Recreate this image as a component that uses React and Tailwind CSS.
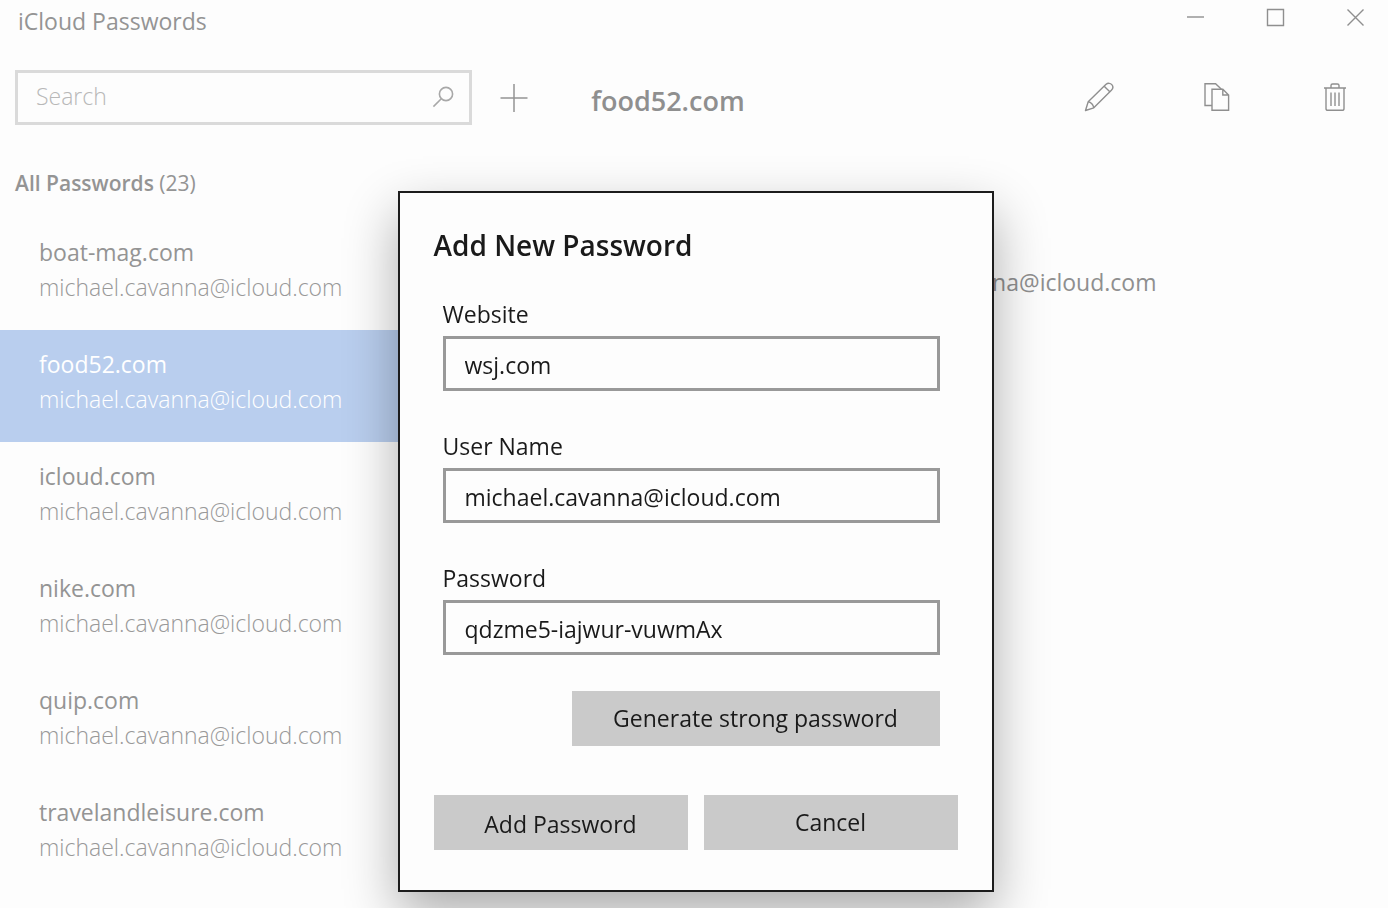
import { useState } from "react";

const EMAIL = "michael.cavanna@icloud.com";

const accounts = [
  { site: "boat-mag.com", user: EMAIL },
  { site: "food52.com", user: EMAIL },
  { site: "icloud.com", user: EMAIL },
  { site: "nike.com", user: EMAIL },
  { site: "quip.com", user: EMAIL },
  { site: "travelandleisure.com", user: EMAIL },
];

const SearchIcon = () => (
  <svg className="w-6 h-6 text-[#a8a8a8]" viewBox="0 0 24 24" fill="none" stroke="currentColor" strokeWidth={1.6}>
    <circle cx="15" cy="8" r="6.6" />
    <path d="M10.3 12.7L2.4 20.6" />
  </svg>
);

const PlusIcon = () => (
  <svg className="w-[30px] h-[30px]" viewBox="0 0 30 30" fill="none" stroke="currentColor" strokeWidth={1.5}>
    <path d="M15 1v28M1.5 15h27" />
  </svg>
);

const PencilIcon = () => (
  <svg className="w-[30px] h-[30px]" viewBox="0 0 30 30" fill="none" stroke="currentColor" strokeWidth={1.4} strokeLinejoin="round">
    <path d="M1.5 28.5L4.2 19.8L21.8 2.6C24 .6 26.6 1.2 27.8 2.6C29.2 4.2 29 6.6 27.4 8.2L9.8 25.8Z" />
    <path d="M20.2 4.2L25.8 9.8M4.2 19.8C6.8 20.2 9.4 22.8 9.8 25.8" />
  </svg>
);

const CopyIcon = () => (
  <svg className="w-[30px] h-[30px]" viewBox="0 0 30 30" fill="none" stroke="currentColor" strokeWidth={1.4}>
    <path d="M10 23.5H3V1.7H13.6L19.4 7.2" />
    <path d="M10 7.2H20.8L26.6 13V28.3H10ZM20.8 7.2V13H26.6" />
  </svg>
);

const TrashIcon = () => (
  <svg className="w-[30px] h-[30px]" viewBox="0 0 30 30" fill="none" stroke="currentColor" strokeWidth={1.4}>
    <path d="M4 6H26M6 6V26.4Q6 28.3 8 28.3H22Q24 28.3 24 26.4V6M11 6V3.6Q11 2 12.6 2H17.4Q19 2 19 3.6V6" />
    <path d="M11 10.5V24M15 10.5V24M19 10.5V24" />
  </svg>
);

const windowButtons = [
  { label: "Minimize", path: "M1 9H18" },
  { label: "Maximize", path: "M1.5 1.5H17.5V17.5H1.5Z" },
  { label: "Close", path: "M1.5 1.5L17.5 17.5M17.5 1.5L1.5 17.5" },
];

const headerActions = [
  { label: "Edit", icon: <PencilIcon /> },
  { label: "Copy", icon: <CopyIcon /> },
  { label: "Delete", icon: <TrashIcon /> },
];

const Sidebar = ({ selected, onSelect }) => (
  <aside className="w-2/5 shrink-0 text-[#949494]">
    <h1 className="pl-[18px] pt-[3px] text-[23px] leading-9">iCloud Passwords</h1>
    <div className="mt-[31px] flex items-center pl-[15px]">
      <div className="flex h-[55px] w-[457px] items-center border-[3px] border-[#dadada] pl-[18px] pr-3.5">
        <input
          type="search"
          aria-label="Search"
          placeholder="Search"
          className="min-w-0 flex-1 bg-transparent pb-0.5 text-[23px] font-light outline-none placeholder:text-[#b8b8b8]"
        />
        <SearchIcon />
      </div>
      <button type="button" aria-label="Add password" className="ml-[27px]">
        <PlusIcon />
      </button>
    </div>
    <h2 className="mt-10 pl-[15px] text-[21px] font-semibold leading-9">
      All Passwords <span className="font-normal">(23)</span>
    </h2>
    <ul className="mt-[17px]">
      {accounts.map(({ site, user }) => (
        <li key={site}>
          <button
            type="button"
            onClick={() => onSelect(site)}
            className={`flex h-28 w-full flex-col items-start pl-[39px] pt-[17px] text-left text-[23px] leading-[35px] ${
              site === selected ? "bg-[#b9ceee] text-white" : ""
            }`}
          >
            <span className={site === selected ? "font-medium" : ""}>{site}</span>
            <span className={site === selected ? "font-light" : "font-light text-[#999999]"}>
              {user}
            </span>
          </button>
        </li>
      ))}
    </ul>
  </aside>
);

const Detail = ({ site }) => (
  <main className="min-w-0 flex-1 text-[#8f8f8f]">
    <div className="flex h-[34px] items-center justify-end gap-[50px] pr-[18px]">
      {windowButtons.map(({ label, path }) => (
        <button key={label} type="button" aria-label={label} className="flex w-[30px] justify-center">
          <svg className="w-[19px] h-[19px]" viewBox="0 0 19 19" fill="none" stroke="currentColor" strokeWidth={1.4}>
            <path d={path} />
          </svg>
        </button>
      ))}
    </div>
    <div className="mt-[42px] flex items-start justify-between pl-9 pr-[34px]">
      <h2 className="pt-1 text-[27px] font-semibold leading-[42px]">{site}</h2>
      <div className="flex gap-20 pt-1.5">
        {headerActions.map(({ label, icon }) => (
          <button key={label} type="button" aria-label={label} className="flex w-[38px] justify-center">
            {icon}
          </button>
        ))}
      </div>
    </div>
    <p className="mt-[142px] pl-[285px] text-[23px] leading-9">{EMAIL}</p>
  </main>
);

const Field = ({ id, label, value, onChange }) => (
  <div>
    <label htmlFor={id} className="block text-[23px] leading-8">
      {label}
    </label>
    <input
      id={id}
      type="text"
      value={value}
      onChange={(e) => onChange(id, e.target.value)}
      className="mt-1.5 block h-[55px] w-full border-[3px] border-[#999999] bg-transparent px-[19px] pt-[3px] text-[23px] outline-none"
    />
  </div>
);

const AddPasswordDialog = () => {
  const [form, setForm] = useState({
    website: "wsj.com",
    username: EMAIL,
    password: "qdzme5-iajwur-vuwmAx",
  });

  const handleChange = (id, value) => setForm({ ...form, [id]: value });

  return (
    <div className="fixed inset-0 flex items-start justify-center pl-[3px] pt-[191px]">
      <form
        role="dialog"
        aria-labelledby="dialog-title"
        onSubmit={(e) => e.preventDefault()}
        className="w-[596px] border-2 border-[#1c1c1c] bg-[#fdfdfd] px-[34px] pb-10 pt-8 text-[#1a1a1a] shadow-[0_22px_50px_rgba(0,0,0,0.32)]"
      >
        <h2 id="dialog-title" className="text-[28px] font-semibold leading-10">
          Add New Password
        </h2>
        <div className="mt-8 flex flex-col gap-[39px] pl-[9px] pr-[18px] pt-px">
          <Field id="website" label="Website" value={form.website} onChange={handleChange} />
          <Field id="username" label="User Name" value={form.username} onChange={handleChange} />
          <Field id="password" label="Password" value={form.password} onChange={handleChange} />
        </div>
        <div className="mt-9 flex justify-end pr-[18px]">
          <button type="button" className="h-[55px] w-[368px] bg-[#cacaca] text-[23px]">
            Generate strong password
          </button>
        </div>
        <div className="mt-[49px] grid grid-cols-2 gap-4">
          <button type="submit" className="h-[55px] bg-[#cacaca] pt-1 text-[23px]">
            Add Password
          </button>
          <button type="button" className="h-[55px] bg-[#cacaca] text-[23px]">
            Cancel
          </button>
        </div>
      </form>
    </div>
  );
};

const App = () => {
  const [selected, setSelected] = useState("food52.com");

  return (
    <div className="flex h-screen overflow-hidden bg-[#fdfdfd] font-['Open_Sans','Noto_Sans',sans-serif]">
      <Sidebar selected={selected} onSelect={setSelected} />
      <Detail site={selected} />
      <AddPasswordDialog />
    </div>
  );
};

export default App;
